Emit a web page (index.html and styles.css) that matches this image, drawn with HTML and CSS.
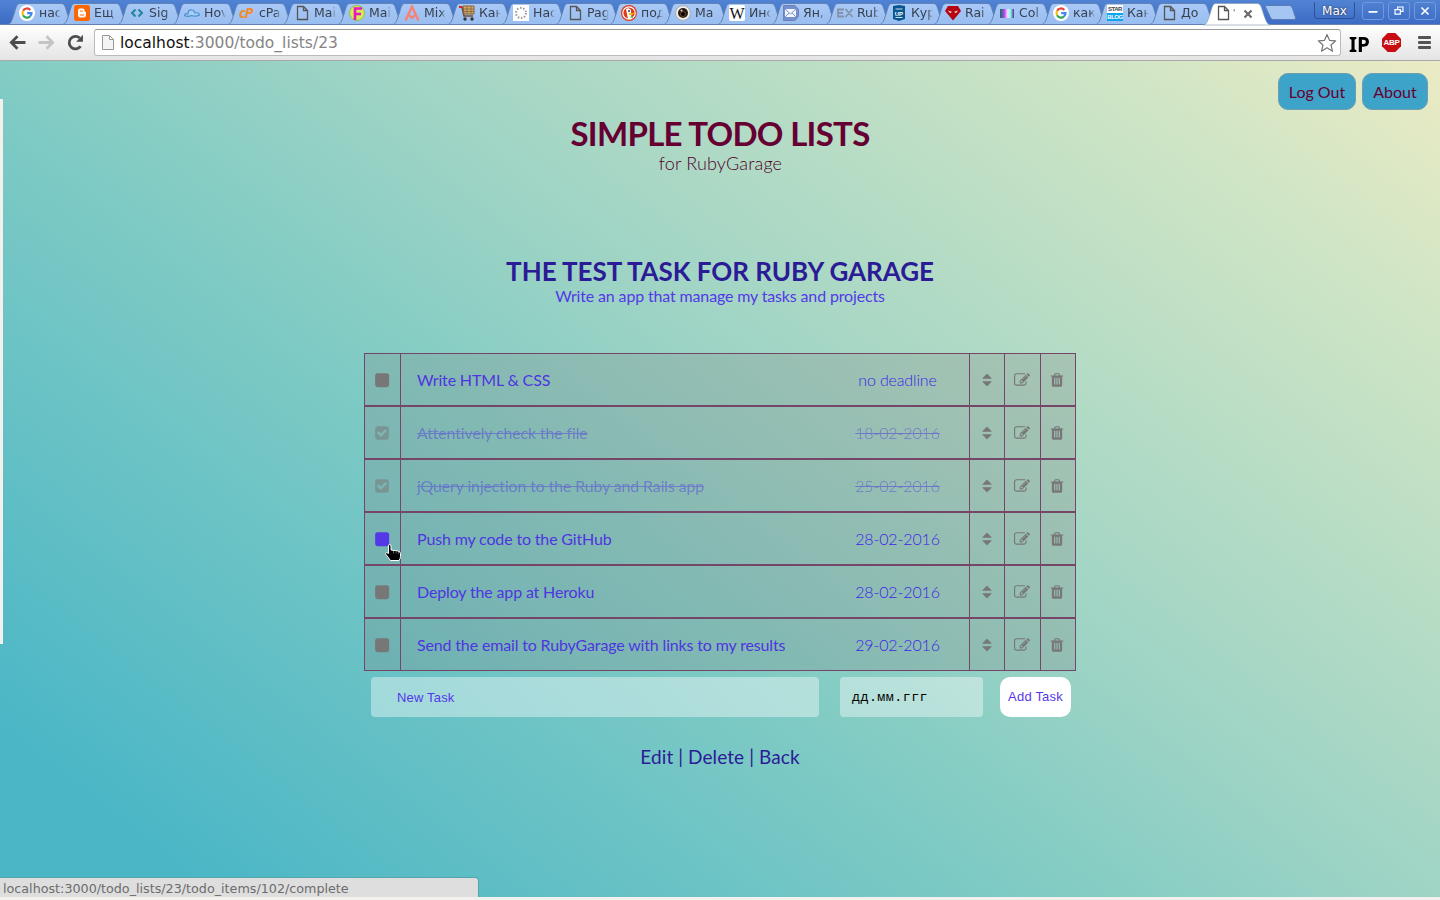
FILE: index.html
```html
<!DOCTYPE html>
<html lang="en">
<head>
<meta charset="utf-8">
<title>Todo lists</title>
<link rel="stylesheet" href="styles.css">
</head>
<body>
<svg class="defs" width="0" height="0">
  <defs>
    <linearGradient id="tabfill" x1="0" y1="0" x2="0" y2="1"><stop offset="0" stop-color="#a9c9f7"/><stop offset="1" stop-color="#98bdf0"/></linearGradient>
    <symbol id="tab" viewBox="0 0 66 22" overflow="visible"><path d="M0 21.5C3 21 4 17 6 11S8.500 .5 12 .5H53C57 .5 57.500 5 59.500 11S63 21 66 21.500Z" fill="url(#tabfill)" stroke="#6083b5"/></symbol>
    <symbol id="page" viewBox="0 0 16 16"><path d="M3.500 1.500h6l4 4v9h-10zM9.500 1.500v4h4" fill="none" stroke="#555" stroke-width="1.300"/></symbol>
    <symbol id="google" viewBox="0 0 16 16"><circle cx="8" cy="8" r="8" fill="#fff"/><g fill="none" stroke-width="2.200"><path d="M4.100 5.700A4.500 4.500 0 0 1 11.300 4.900" stroke="#ea4335"/><path d="M4.100 5.700a4.500 4.500 0 0 0 0 4.600" stroke="#fbbc05"/><path d="M4.100 10.300a4.500 4.500 0 0 0 7 1.100" stroke="#34a853"/><path d="M11.100 11.400A4.500 4.500 0 0 0 12.500 8.200H8.200" stroke="#4285f4"/></g></symbol>
    <symbol id="sort" viewBox="0 0 1792 1792"><path d="M1408 1088q0 26-19 45l-448 448q-19 19-45 19t-45-19l-448-448q-19-19-19-45t19-45 45-19h896q26 0 45 19t19 45zm0-384q0 26-19 45t-45 19h-896q-26 0-45-19t-19-45 19-45l448-448q19-19 45-19t45 19l448 448q19 19 19 45z"/></symbol>
    <symbol id="edit" viewBox="0 0 1792 1792"><path d="M888 1184l116-116-152-152-116 116v56h96v96h56zm440-720q-16-16-33 1l-350 350q-17 17-1 33t33-1l350-350q17-17 1-33zm80 594v190q0 119-84.500 203.500t-203.500 84.500h-832q-119 0-203.500-84.500t-84.500-203.500v-832q0-119 84.500-203.500t203.500-84.500h832q63 0 117 25 15 7 18 23 3 17-9 29l-49 49q-14 14-32 8-23-6-45-6h-832q-66 0-113 47t-47 113v832q0 66 47 113t113 47h832q66 0 113-47t47-113v-126q0-13 9-22l64-64q15-15 35-7t20 29zm-96-738l288 288-672 672h-288v-288zm444 132l-92 92-288-288 92-92q28-28 68-28t68 28l152 152q28 28 28 68t-28 68z"/></symbol>
    <symbol id="trash" viewBox="0 0 1792 1792"><path d="M704 1376v-704q0-14-9-23t-23-9h-64q-14 0-23 9t-9 23v704q0 14 9 23t23 9h64q14 0 23-9t9-23zm256 0v-704q0-14-9-23t-23-9h-64q-14 0-23 9t-9 23v704q0 14 9 23t23 9h64q14 0 23-9t9-23zm256 0v-704q0-14-9-23t-23-9h-64q-14 0-23 9t-9 23v704q0 14 9 23t23 9h64q14 0 23-9t9-23zm-544-992h448l-48-117q-7-9-17-11h-317q-10 2-17 11zm928 32v64q0 14-9 23t-23 9h-96v948q0 83-47 143.500t-113 60.500h-832q-66 0-113-58.500t-47-141.500v-952h-96q-14 0-23-9t-9-23v-64q0-14 9-23t23-9h309l70-167q15-37 54-63t79-26h320q40 0 79 26t54 63l70 167h309q14 0 23 9t9 23z"/></symbol>
    <symbol id="check" viewBox="0 0 1792 1792"><path d="M813 1299l614-614q19-19 19-45t-19-45l-102-102q-19-19-45-19t-45 19l-467 467-211-211q-19-19-45-19t-45 19l-102 102q-19 19-19 45t19 45l358 358q19 19 45 19t45-19zm851-883v960q0 119-84.500 203.500t-203.500 84.500h-960q-119 0-203.500-84.500t-84.500-203.500v-960q0-119 84.500-203.500t203.500-84.500h960q119 0 203.500 84.500t84.500 203.500z"/></symbol>
    <symbol id="square" viewBox="0 0 1792 1792"><rect x="128" y="128" width="1568" height="1568" rx="270"/></symbol>
  </defs>
</svg>

<div class="tabstrip">
  <div class="tabs">
    <div class="tab"><svg class="shape"><use href="#tab"/></svg><svg class="fav"><use href="#google"/></svg><span class="label">нас</span></div>
    <div class="tab"><svg class="shape"><use href="#tab"/></svg><svg class="fav" viewBox="0 0 16 16"><rect width="16" height="16" rx="2.500" fill="#f60"/><path d="M4 5.500Q4 3.500 6 3.500h2.500q2.200 0 2.200 2.200 0 1.300 1.300 1.300v3.300q0 2.200-2.200 2.200H6q-2 0-2-2z" fill="#fff"/><path d="M6.300 6h2M6.300 10h3.400" stroke="#f60" stroke-width="1.200" stroke-linecap="round"/></svg><span class="label">Ещ</span></div>
    <div class="tab"><svg class="shape"><use href="#tab"/></svg><svg class="fav" viewBox="0 0 16 16"><path d="M6.500 4.500L3 8l3.500 3.500M9.500 4.500L13 8l-3.500 3.500" fill="none" stroke="#23859c" stroke-width="2"/></svg><span class="label">Sig</span></div>
    <div class="tab"><svg class="shape"><use href="#tab"/></svg><svg class="fav" viewBox="0 0 16 16"><path d="M.5 10.500Q1 8 4 9q0-5 4-4 2 0 3 3 4-1 4.500 2-4 2-8 .5-4 2-7.500-.5z" fill="#a6cff4" stroke="#4c90cf" stroke-width="1.200"/></svg><span class="label">Hov</span></div>
    <div class="tab"><svg class="shape"><use href="#tab"/></svg><b class="fav cp">cP</b><span class="label">cPa</span></div>
    <div class="tab"><svg class="shape"><use href="#tab"/></svg><svg class="fav"><use href="#page"/></svg><span class="label">Mai</span></div>
    <div class="tab"><svg class="shape"><use href="#tab"/></svg><svg class="fav" viewBox="0 0 16 16"><circle cx="8" cy="8" r="7.500" fill="#d9e85b" stroke="#8bc34a"/><path d="M6 15V3.500h7M6 9h6" fill="none" stroke="#e815c3" stroke-width="2.600"/></svg><span class="label">Mai</span></div>
    <div class="tab"><svg class="shape"><use href="#tab"/></svg><svg class="fav" viewBox="0 0 16 16"><path d="M1.500 15.500L8 1.500l6.500 14M5 10l3 3 3-3" fill="none" stroke="#fa8072" stroke-width="2.300"/></svg><span class="label">Mix</span></div>
    <div class="tab"><svg class="shape"><use href="#tab"/></svg><svg class="fav" viewBox="0 0 16 16"><path d="M0 2h3l2 9h9" fill="none" stroke="#764d35" stroke-width="1.600"/><path d="M4 1h11v8H5z" fill="#d5a868" stroke="#80643f"/><path d="M4 4h11M5 6.500h10M8 1v8M12 1v8" stroke="#80643f" stroke-width=".8"/><path d="M0 2h3" stroke="#d22" stroke-width="2"/><circle cx="6" cy="14" r="1.700" fill="#333"/><circle cx="13" cy="14" r="1.700" fill="#333"/></svg><span class="label">Кан</span></div>
    <div class="tab"><svg class="shape"><use href="#tab"/></svg><svg class="fav" viewBox="0 0 16 16"><path d="M0 0h16v16H0z" fill="#fff"/><circle cx="8" cy="8" r="5" fill="none" stroke="#999" stroke-width="2" stroke-dasharray="1.500 1.640"/></svg><span class="label">Нас</span></div>
    <div class="tab"><svg class="shape"><use href="#tab"/></svg><svg class="fav"><use href="#page"/></svg><span class="label">Pag</span></div>
    <div class="tab"><svg class="shape"><use href="#tab"/></svg><svg class="fav" viewBox="0 0 16 16"><circle cx="8" cy="8" r="8" fill="#de3b1b"/><circle cx="8" cy="8" r="6.200" fill="#de3b1b" stroke="#fff" stroke-width="1.200"/><path d="M5 4q3-2 5 1v4l1 5H7z" fill="#fff"/><path d="M8 8h5l-2 2H8z" fill="#fdb813"/><circle cx="8" cy="6" r="1" fill="#236"/><path d="M8 12l4-1v2z" fill="#4caf50"/></svg><span class="label">под</span></div>
    <div class="tab"><svg class="shape"><use href="#tab"/></svg><svg class="fav" viewBox="0 0 16 16"><circle cx="8" cy="8" r="7.400" fill="#eee" stroke="#aaa"/><circle cx="8" cy="8" r="5" fill="#2b1b11"/><circle cx="8" cy="9" r="2.500" fill="#000" stroke="#6b4528"/><circle cx="6.500" cy="5.500" r="1" fill="#ddd"/></svg><span class="label">Ma</span></div>
    <div class="tab"><svg class="shape"><use href="#tab"/></svg><span class="fav wiki">W</span><span class="label">Инс</span></div>
    <div class="tab"><svg class="shape"><use href="#tab"/></svg><svg class="fav" viewBox="0 0 16 16"><path d="M.5.5H12l3.500 4v7l-3.500 4H.5z" fill="#7290cd" stroke="#7081b5"/><path d="M2 4h11v8H2z" fill="#f3f5ff"/><path d="M2 4l5.500 5L13 4M2 12l4-4M13 12L9 8" fill="none" stroke="#7b8fc8"/></svg><span class="label">Ян,</span></div>
    <div class="tab"><svg class="shape"><use href="#tab"/></svg><svg class="fav" viewBox="0 0 16 16"><path d="M7 4.500H1v7h6M1 8h5M8.500 4l7 8M15.500 4l-7 8" fill="none" stroke="#8292a6" stroke-width="1.800"/></svg><span class="label">Rub</span></div>
    <div class="tab"><svg class="shape"><use href="#tab"/></svg><svg class="fav" viewBox="0 0 16 16"><path d="M2 1l6-1 6 1v13l-6 2-6-2z" fill="#075690"/><path d="M4.500 4h7M4.500 12.500h7" stroke="#cde" stroke-width="1"/><text x="3.700" y="10.500" class="up">UP</text></svg><span class="label">Кур</span></div>
    <div class="tab"><svg class="shape"><use href="#tab"/></svg><svg class="fav" viewBox="0 0 16 16"><path d="M3 1h10l3 5-8 9.500L0 6z" fill="#b60510"/><path d="M3 5.500l4 1.500-2 1zM13 5.500L9 7l2 1z" fill="#fff"/></svg><span class="label">Rai</span></div>
    <div class="tab"><svg class="shape"><use href="#tab"/></svg><i class="fav swatch"></i><span class="label">Col</span></div>
    <div class="tab"><svg class="shape"><use href="#tab"/></svg><svg class="fav"><use href="#google"/></svg><span class="label">как</span></div>
    <div class="tab"><svg class="shape"><use href="#tab"/></svg><b class="fav star"><span>STAR</span><span class="blog">BLOG</span></b><span class="label">Кан</span></div>
    <div class="tab"><svg class="shape"><use href="#tab"/></svg><svg class="fav"><use href="#page"/></svg><span class="label">До</span></div>
    <div class="tab active"><svg class="shape" viewBox="0 0 66 22"><path d="M0 22C3 21 4 17 6 11S8.500 .5 12 .5H53C57 .5 57.500 5 59.500 11S63 21 66 22Z" fill="#fff" stroke="#8795ad" stroke-width=".6"/></svg><svg class="fav"><use href="#page"/></svg><span class="label">'</span><svg class="close" viewBox="0 0 10 10"><path d="M1.500 1.500l7 7M8.500 1.500l-7 7" stroke="#666" stroke-width="2"/></svg></div>
  </div>
  <svg class="newtab" viewBox="0 0 32 16"><path d="M1.500.5h23q2 0 3 3l3 9q.5 2-1.500 2H8q-2 0-3-3L.8 2.500Q0 .5 1.500.5z" fill="#a5c5f3" stroke="#5b7cb4"/></svg>
  <div class="winctl">
    <span class="user">Max</span>
    <svg class="wb" viewBox="0 0 22 18"><path d="M6 10h10" stroke="#fff" stroke-width="2"/></svg>
    <svg class="wb" viewBox="0 0 22 18"><path d="M9.500 7V4.500h6v5H13M6.500 7.500h6v5h-6z" fill="none" stroke="#fff" stroke-width="1.300"/></svg>
    <svg class="wb" viewBox="0 0 22 18"><path d="M7 5l8 8M15 5l-8 8" stroke="#fff" stroke-width="1.800"/></svg>
  </div>
</div>

<div class="toolbar">
  <svg class="nav" viewBox="0 0 16 16"><path d="M15.500 8H2.500M8 2.200L2.200 8 8 13.800" fill="none" stroke="#4d4d4d" stroke-width="2.600"/></svg>
  <svg class="nav" viewBox="0 0 16 16"><path d="M.5 8h13M8 2.200L13.800 8 8 13.800" fill="none" stroke="#c4c4c4" stroke-width="2.600"/></svg>
  <svg class="nav" viewBox="0 0 16 16"><path d="M12.800 11.500A5.900 5.900 0 1 1 12 3.800" fill="none" stroke="#4d4d4d" stroke-width="2.600"/><path d="M15 .8v6.400H8.600z" fill="#4d4d4d"/></svg>
  <div class="omnibox">
    <svg class="docicon" viewBox="0 0 14 17"><path d="M1.500 1.500h7l4 4v10h-11zM8.500 1.500v4h4" fill="#f4f4f4" stroke="#999"/></svg>
    <span class="url"><span class="host">localhost</span>:3000/todo_lists/23</span>
    <svg class="bookmark" viewBox="0 0 20 20"><path d="M10 1.500l2.500 5.800 6.200.5-4.700 4.200 1.500 6.200L10 14.800l-5.500 3.400L6 12 1.300 7.800l6.200-.5z" fill="#fff" stroke="#777" stroke-width="1.200" stroke-linejoin="round"/></svg>
  </div>
  <b class="ip">IP</b>
  <b class="abp">ABP</b>
  <i class="burger"><i></i><i></i><i></i></i>
</div>

<main class="page">
  <div class="drawer"></div>
  <nav class="usernav"><a class="pill logout">Log Out</a><a class="pill">About</a></nav>
  <header class="head"><h1 class="brand">SIMPLE TODO LISTS</h1><p class="tagline">for RubyGarage</p></header>
  <section class="listhead"><h2 class="listname">THE TEST TASK FOR RUBY GARAGE</h2><p class="desc">Write an app that manage my tasks and projects</p></section>
  <div class="items">
    <div class="item"><div class="cell"><svg class="ic"><use href="#square"/></svg></div><div class="cell body"><span class="task">Write HTML &amp; CSS</span><span class="date">no deadline</span></div><div class="cell sorter"><svg class="ic"><use href="#sort"/></svg></div><div class="cell"><svg class="ic"><use href="#edit"/></svg></div><div class="cell"><svg class="ic"><use href="#trash"/></svg></div></div>
    <div class="item done"><div class="cell"><svg class="ic box"><use href="#check"/></svg></div><div class="cell body"><span class="task">Attentively check the file</span><span class="date">18-02-2016</span></div><div class="cell sorter"><svg class="ic"><use href="#sort"/></svg></div><div class="cell"><svg class="ic"><use href="#edit"/></svg></div><div class="cell"><svg class="ic"><use href="#trash"/></svg></div></div>
    <div class="item done"><div class="cell"><svg class="ic box"><use href="#check"/></svg></div><div class="cell body"><span class="task">jQuery injection to the Ruby and Rails app</span><span class="date">25-02-2016</span></div><div class="cell sorter"><svg class="ic"><use href="#sort"/></svg></div><div class="cell"><svg class="ic"><use href="#edit"/></svg></div><div class="cell"><svg class="ic"><use href="#trash"/></svg></div></div>
    <div class="item"><div class="cell"><svg class="ic hover"><use href="#square"/></svg>
      <svg class="cursor" viewBox="0 0 17 17"><path d="M4.500.5q1.500 0 1.500 1.500v4l7 1q2.500.5 2.500 2.500v3q0 2-1.500 4H5.500L1 10.500Q0 9 1.500 8.500L3.500 9.500V2q0-1.500 1-1.500z" fill="#000" stroke="#fff"/><path d="M8.500 7v2.500M11 7.500v2M13.500 8v2" stroke="#888" stroke-width=".7"/></svg></div><div class="cell body"><span class="task">Push my code to the GitHub</span><span class="date">28-02-2016</span></div><div class="cell sorter"><svg class="ic"><use href="#sort"/></svg></div><div class="cell"><svg class="ic"><use href="#edit"/></svg></div><div class="cell"><svg class="ic"><use href="#trash"/></svg></div></div>
    <div class="item"><div class="cell"><svg class="ic"><use href="#square"/></svg></div><div class="cell body"><span class="task">Deploy the app at Heroku</span><span class="date">28-02-2016</span></div><div class="cell sorter"><svg class="ic"><use href="#sort"/></svg></div><div class="cell"><svg class="ic"><use href="#edit"/></svg></div><div class="cell"><svg class="ic"><use href="#trash"/></svg></div></div>
    <div class="item"><div class="cell"><svg class="ic"><use href="#square"/></svg></div><div class="cell body"><span class="task">Send the email to RubyGarage with links to my results</span><span class="date">29-02-2016</span></div><div class="cell sorter"><svg class="ic"><use href="#sort"/></svg></div><div class="cell"><svg class="ic"><use href="#edit"/></svg></div><div class="cell"><svg class="ic"><use href="#trash"/></svg></div></div>
  </div>
  <div class="newtask"><div class="field name">New Task</div><div class="field due"><span>дд.мм.ггг</span></div><div class="add">Add Task</div></div>
  <div class="links"><a>Edit</a> | <a>Delete</a> | <a>Back</a></div>
  <div class="status">localhost:3000/todo_lists/23/todo_items/102/complete</div>
</main>
</body>
</html>
```
FILE: styles.css
```css
* { box-sizing: border-box; }
body { margin: 0; width: 1440px; height: 900px; overflow: hidden; background: #f2f1ee; display: flex; flex-direction: column; font-family: Lato, sans-serif; }
.defs { position: absolute; }
h1, h2, p { margin: 0; }

.tabstrip { height: 25px; flex: none; background: linear-gradient(#5183d4, #3c6cc4); border-bottom: 1px solid #6c84ad; display: flex; align-items: flex-start; font-family: "DejaVu Sans", sans-serif; }
.tabs { display: flex; flex: none; width: 1251px; padding: 3px 0 0 8px; }
.tab { position: relative; flex: none; width: 54px; height: 21px; padding-left: 11px; display: flex; align-items: center; gap: 4px; }
.tab:nth-child(-n+8) { width: 55px; }
.shape { position: absolute; left: 0; top: 0; width: 66px; height: 22px; overflow: visible; }
.fav { position: relative; flex: none; width: 16px; height: 16px; margin-top: -1px; }
.label { position: relative; flex: none; width: 22px; overflow: hidden; white-space: nowrap; font-size: 12.500px; line-height: 20px; color: #37414f; margin-top: -1px; -webkit-mask-image: linear-gradient(90deg, #000 75%, transparent); mask-image: linear-gradient(90deg, #000 75%, transparent); }
.active { z-index: 2; }
.active .label { width: 4px; margin: 0 0 0 -2px; font-size: 8px; line-height: 16px; }
.close { position: relative; flex: none; width: 10px; height: 10px; margin-left: 2px; }
.cp { color: #f58a1f; font: italic bold 14px/16px "Open Sans", sans-serif; letter-spacing: -1px; }
.wiki { background: #fff; border-radius: 2px; color: #111; font: 16px/17px "Liberation Serif", serif; text-align: center; }
.swatch { width: 14px; height: 9px; margin: 0 1px; background: linear-gradient(90deg, #174, #a4f 30%, #fdf 55%, #7fd 75%, #62a); }
.star { background: #fff; display: flex; flex-direction: column; font: bold 6px/8px "Liberation Sans", sans-serif; text-align: center; color: #444; letter-spacing: -.500px; }
.blog { background: #0ca5f0; color: #fff; }
.up { font: bold 6px "Liberation Sans", sans-serif; fill: #fff; }
.newtab { width: 32px; height: 16px; margin: 5px 0 0 14px; }
.winctl { margin-left: auto; display: flex; gap: 4px; padding: 2px 4px 0 0; }
.user { width: 41px; height: 17px; margin-right: 3px; border: 1px solid #2d5295; border-top: 0; border-radius: 0 0 4px 4px; color: #fff; font-size: 12px; line-height: 18px; text-align: center; text-shadow: 0 0 2px #223; }
.wb { width: 22px; height: 18px; border: 1px solid #7299dc; border-radius: 3px; }

.toolbar { height: 36px; flex: none; background: linear-gradient(#fff, #e4e4e4); border-bottom: 1px solid #a9a9a9; display: flex; align-items: center; padding: 0 9px 0 9px; }
.nav { width: 17px; height: 17px; margin-right: 12px; flex: none; }
.omnibox { flex: none; width: 1247px; height: 27px; margin-left: -2px; border: 1px solid #bbb; border-top-color: #999; border-radius: 3px; background: #fff; display: flex; align-items: center; padding: 0 3px 0 6px; }
.docicon { width: 14px; height: 17px; margin-right: 5px; }
.url { flex: 1; font: 15.500px/22px "DejaVu Sans", sans-serif; color: #858585; }
.host { color: #111; }
.bookmark { width: 20px; height: 20px; }
.ip { flex: none; width: 21px; margin-left: 8px; font: bold 22px/24px "Noto Sans", sans-serif; color: #000; transform: scaleX(.940); transform-origin: left; }
.abp { flex: none; width: 19px; height: 19px; margin-left: 12px; background: #c70d12; clip-path: polygon(30% 0, 70% 0, 100% 30%, 100% 70%, 70% 100%, 30% 100%, 0 70%, 0 30%); color: #fff; font: bold 8px/19px "Liberation Sans", sans-serif; text-align: center; letter-spacing: -.300px; }
.burger { flex: none; width: 13px; margin-left: 17px; display: flex; flex-direction: column; gap: 2px; }
.burger i { height: 3px; background: #555; border-radius: 1px; }

.page { position: relative; height: 836px; flex: none; background: linear-gradient(38deg, #4ab6c6 8%, #83ccc4 43%, #9fd4c5 57%, #cfe5c5 86%, #ebebc4 100%); display: flex; flex-direction: column; align-items: center; }
.drawer { position: absolute; left: 0; top: 38px; width: 3px; height: 545px; background: #f2f1ee; }
.usernav { align-self: flex-end; display: flex; gap: 6px; padding: 12px 12px 0 0; height: 49px; }
.pill { width: 66px; height: 37px; background: #3ea3c8; border: 1px solid #6e9db0; border-radius: 10px; color: #603; font-size: 16px; line-height: 36px; text-align: center; }
.logout { width: 78px; }
.head { height: 146px; text-align: center; padding-top: 3px; }
.brand { color: #603; font-size: 33px; line-height: 40px; font-weight: 700; letter-spacing: -.700px; }
.tagline { color: #4f0028; font-size: 18px; font-weight: 300; line-height: 20px; letter-spacing: .170px; padding-left: 1px; }
.listhead { height: 97px; text-align: center; }
.listname { color: #2b1b97; font-size: 26px; font-weight: 700; line-height: 30px; letter-spacing: -.050px; }
.desc { color: #5438e8; font-size: 16px; line-height: 20px; letter-spacing: -.150px; }
.items { width: 712px; }
.item { display: grid; grid-template-columns: 35px 569px 35px 36px 35px; height: 53px; border: 1px solid #764668; background: rgba(128, 128, 128, .250); }
.cell { position: relative; display: flex; align-items: center; justify-content: center; padding-right: 2px; border-left: 1px solid #764668; }
.cell:first-child { border-left: 0; }
.cell.sorter { padding-right: 1px; }
.cell.body { justify-content: space-between; padding: 0 19px 0 16px; color: #4f35e0; font-size: 16px; letter-spacing: -.155px; }
.date { width: 105px; text-align: center; font-weight: 300; color: #3d1fe6; }
.done .task, .done .date { opacity: .450; text-decoration: line-through; }
.ic { flex: none; width: 16px; height: 16px; fill: #777; }
.box { opacity: .500; }
.hover { fill: #5438e8; }
.cursor { position: absolute; left: 20px; top: 31px; width: 17px; height: 17px; z-index: 1; }
.newtask { width: 712px; display: flex; padding: 6px 5px 0 7px; font: 13px "Liberation Sans", sans-serif; }
.field { height: 40px; border-radius: 4px; background: rgba(255, 255, 255, .400); line-height: 41px; }
.name { width: 448px; margin-right: 21px; padding-left: 26px; color: #5438e8; letter-spacing: .180px; }
.due { width: 143px; margin-right: 17px; padding-left: 12px; color: #000; font-family: "Liberation Mono", monospace; font-size: 13.330px; letter-spacing: .450px; }
.add { width: 71px; height: 40px; border-radius: 10px; background: #fff; color: #5438e8; line-height: 40px; text-align: center; letter-spacing: .200px; }
.links { margin-top: 28px; color: #2b1b97; font-size: 19px; line-height: 24px; letter-spacing: .090px; }
.status { position: absolute; left: 0; bottom: 0; width: 479px; height: 20px; background: #dedede; border: 1px solid #55a5ad; border-left: 0; border-bottom: 0; border-radius: 0 4px 0 0; padding-left: 3px; font: 12.730px/21px "DejaVu Sans", sans-serif; color: #6c6c6c; white-space: nowrap; }
```
